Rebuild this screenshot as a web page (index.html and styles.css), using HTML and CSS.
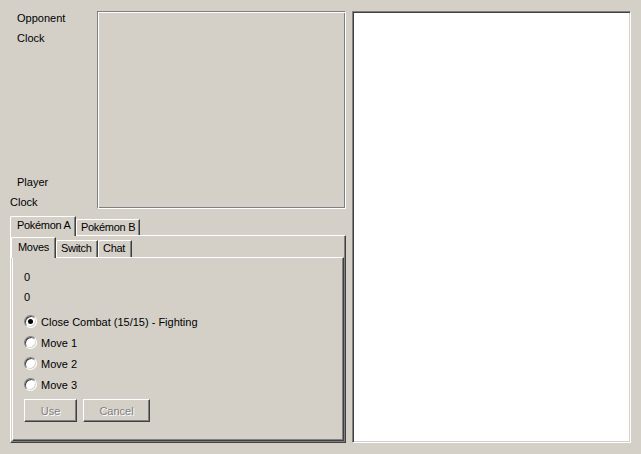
FILE: index.html
```html
<!DOCTYPE html>
<html lang="en">
<head>
    <meta charset="UTF-8">
    <title>Battle</title>
    <link rel="stylesheet" href="styles.css">
</head>
<body>
    <div class="app">
        <div class="left">
            <div class="top">
                <div class="labels">
                    <div class="group">
                        <div class="label">Opponent</div>
                        <div class="label">Clock</div>
                    </div>
                    <div class="group">
                        <div class="label">Player</div>
                        <div class="label flush">Clock</div>
                    </div>
                </div>
                <div class="frame"></div>
            </div>

            <div class="tabs">
                <div class="tab-row outer">
                    <div class="tab selected tab-a">Pokémon A</div>
                    <div class="tab tab-b">Pokémon B</div>
                </div>
                <div class="pane outer-pane">
                    <div class="tab-row inner">
                        <div class="tab selected tab-moves">Moves</div>
                        <div class="tab tab-switch">Switch</div>
                        <div class="tab tab-chat">Chat</div>
                    </div>
                    <div class="pane inner-pane">
                        <div class="value">0</div>
                        <div class="value">0</div>
                        <div class="moves">
                            <label class="move"><span class="radio checked"></span>Close Combat (15/15) - Fighting</label>
                            <label class="move"><span class="radio"></span>Move 1</label>
                            <label class="move"><span class="radio"></span>Move 2</label>
                            <label class="move"><span class="radio"></span>Move 3</label>
                        </div>
                        <div class="buttons">
                            <button class="btn use" disabled>Use</button>
                            <button class="btn cancel" disabled>Cancel</button>
                        </div>
                    </div>
                </div>
            </div>
        </div>

        <div class="chat"></div>
    </div>
</body>
</html>
```

FILE: styles.css
```css
body {
    margin: 0;
    background-color: #d4d0c8;
    font-family: "Liberation Sans", Arial, sans-serif;
    font-size: 11px;
    color: #000;
}
.app {
    display: flex;
    gap: 6px;
    padding: 11px 0 0 10px;
}
.left {
    width: 336px;
    display: flex;
    flex-direction: column;
}
.top {
    display: flex;
    height: 198px;
}
.labels {
    width: 87px;
    display: flex;
    flex-direction: column;
    justify-content: space-between;
}
.label {
    line-height: 14px;
    padding-left: 7px;
}
.label + .label {
    margin-top: 6px;
}
.label.flush {
    padding-left: 0;
}
.frame {
    width: 249px;
    box-sizing: border-box;
    border: 1px solid;
    border-color: #808080 #fff #fff #808080;
    box-shadow: inset 1px 1px #fff, inset -1px -1px #808080;
}

/* tabs */
.tabs {
    margin-top: 7px;
}
.tab-row {
    display: flex;
    align-items: flex-end;
}
.tab-row.outer {
    height: 19px;
}
.tab-row.inner {
    height: 20px;
}
.tab {
    position: relative;
    box-sizing: border-box;
    height: 16px;
    line-height: 15px;
    padding: 0 0 0 4px;
    border-top: 1px solid #fff;
    border-left: 1px solid #fff;
    border-right: 1px solid #404040;
    border-top-left-radius: 2px;
    box-shadow: inset -1px 0 #808080;
    white-space: nowrap;
    letter-spacing: -0.3px;
}
.tab.selected {
    height: 20px;
    line-height: 17px;
    padding-left: 6px;
    margin-bottom: -1px;
    background-color: #d4d0c8;
    z-index: 1;
}
.tab-row.inner .tab {
    height: 17px;
}
.tab-row.inner .tab.selected {
    height: 21px;
    line-height: 18px;
}
.tab-a { width: 66px; }
.tab-b { width: 64px; }
.tab-moves { width: 45px; }
.tab-switch { width: 42px; }
.tab-chat { width: 34px; }

.pane {
    box-sizing: border-box;
    border: 1px solid;
    border-color: #fff #404040 #404040 #fff;
    box-shadow: inset -1px -1px #808080;
}
.outer-pane {
    height: 208px;
    padding: 1px 1px 1px 0;
}
.inner-pane {
    height: 184px;
    margin-left: 1px;
    padding: 9px 0 0 11px;
}
.value {
    line-height: 20px;
}
.moves {
    margin-top: 4px;
}
.move {
    display: flex;
    align-items: center;
    height: 21px;
    gap: 4px;
}
.radio {
    position: relative;
    box-sizing: border-box;
    width: 13px;
    height: 13px;
    border-radius: 50%;
    border: 1px solid;
    border-color: #808080 #fff #fff #808080;
    box-shadow: inset 1px 1px #404040, inset -1px -1px #d4d0c8;
    background-color: #fff;
}
.radio.checked::after {
    content: "";
    position: absolute;
    left: 3px;
    top: 3px;
    width: 5px;
    height: 5px;
    border-radius: 50%;
    background-color: #000;
}
.buttons {
    display: flex;
    gap: 6px;
    margin-top: 4px;
}
.btn {
    box-sizing: border-box;
    height: 23px;
    font-family: inherit;
    font-size: 11px;
    color: #808080;
    text-shadow: 1px 1px #fff;
    background-color: #d4d0c8;
    border: 1px solid;
    border-color: #fff #404040 #404040 #fff;
    box-shadow: inset -1px -1px #808080;
    padding: 0;
}
.btn.use {
    width: 53px;
}
.btn.cancel {
    width: 67px;
}

.chat {
    width: 279px;
    height: 432px;
    box-sizing: border-box;
    background-color: #fff;
    border: 1px solid;
    border-color: #808080 #fff #fff #808080;
    box-shadow: inset 1px 1px #404040, inset -1px -1px #d4d0c8;
}
```
